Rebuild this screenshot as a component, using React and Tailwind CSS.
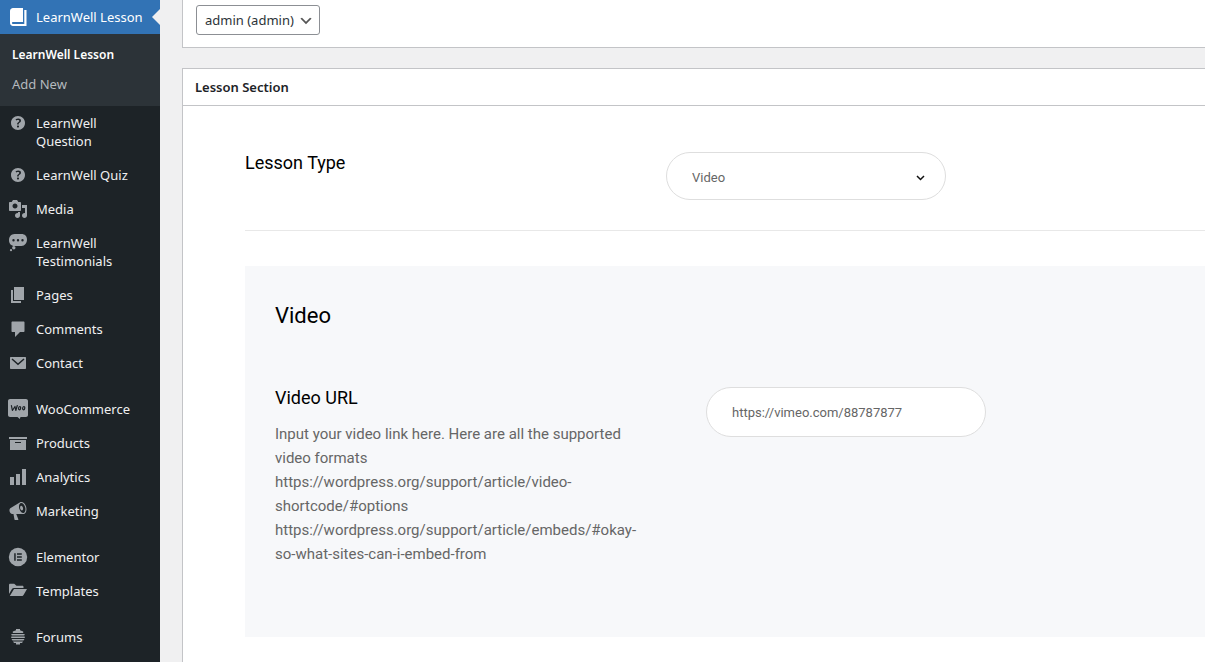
import React from 'react';

const Icon = ({ children }) => (
  <svg xmlns="http://www.w3.org/2000/svg" className="h-5 w-5 shrink-0" viewBox="0 0 20 20" fill="currentColor" aria-hidden="true">
    {children}
  </svg>
);

const icons = {
  book: <path d="M16.300 3h2.200v16H5c-1.660 0-3-1.340-3-3V4c0-1.660 1.340-3 3-3h10v14H5c-.55 0-1 .45-1 1s.45 1 1 1h11.300V3z" />,
  help: (
    <path d="M17 10c0-3.87-3.14-7-7-7-3.87 0-7 3.13-7 7s3.13 7 7 7c3.86 0 7-3.13 7-7zm-6.3 1.48H9.14v-.43c0-.38.08-.7.24-.98s.46-.57.88-.89c.41-.29.68-.53.81-.71.14-.18.2-.39.2-.62 0-.25-.09-.44-.28-.58-.19-.13-.45-.19-.79-.19-.58 0-1.25.15-2 .46l-.64-1.28c.87-.49 1.8-.74 2.77-.74.81 0 1.45.2 1.92.58.48.39.71.91.71 1.55 0 .43-.09.8-.29 1.11-.19.32-.57.67-1.11 1.06-.38.28-.61.49-.71.63-.1.15-.15.34-.15.57v.46zm-1.47 2.72c-.18-.17-.27-.42-.27-.73 0-.33.08-.58.26-.75s.43-.25.77-.25c.32 0 .57.09.75.26s.27.42.27.74c0 .3-.09.55-.27.72-.18.18-.43.27-.75.27-.33 0-.58-.09-.76-.26z" />
  ),
  media: (
    <path d="M13 11V4c0-.55-.45-1-1-1h-1.67L9 1H5L3.67 3H2c-.55 0-1 .45-1 1v7c0 .55.45 1 1 1h10c.55 0 1-.45 1-1zM7 4.5c1.38 0 2.5 1.12 2.5 2.5S8.38 9.5 7 9.5 4.5 8.38 4.5 7 5.62 4.5 7 4.5zM14 6h5v10.5c0 1.38-1.12 2.5-2.5 2.5S14 17.88 14 16.5s1.12-2.5 2.5-2.5c.17 0 .34.02.5.05V9h-3V6zm-4 8.05V13h2v3.5c0 1.38-1.12 2.5-2.5 2.5S7 17.88 7 16.5 8.12 14 9.5 14c.17 0 .34.02.5.05z" />
  ),
  testimonial: (
    <>
      <path fillRule="evenodd" d="M6.500 1h7C16.800 1 19 3.200 19 6.500S16.800 13 13.500 13h-7C3.200 13 1 10.500 1 7.200S3.200 1 6.500 1zM5.500 6a1.200 1.200 0 100 2.400 1.200 1.200 0 000-2.400zm4.500 0a1.200 1.200 0 100 2.400 1.200 1.200 0 000-2.400zm4.500 0a1.200 1.200 0 100 2.400 1.200 1.200 0 000-2.400z" />
      <circle cx="5.800" cy="14.700" r="1.700" />
      <circle cx="3" cy="17.200" r="1.100" />
    </>
  ),
  page: <path d="M6 15V2h10v13H6zm-1 1h8v2H3V5h2v11z" />,
  comment: <path d="M4.500 2.500h11c.6 0 1 .4 1 1v8.500c0 .6-.4 1-1 1H12l-5 5v-5H4.500c-.6 0-1-.4-1-1V3.500c0-.6.400-1 1-1z" />,
  email: (
    <>
      <path d="M3 4h14c.6 0 1 .4 1 1v10c0 .6-.4 1-1 1H3c-.6 0-1-.4-1-1V5c0-.6.400-1 1-1z" />
      <path d="M4 6l6 5.200L16 6" fill="none" stroke="#1d2327" strokeWidth="1.500" />
    </>
  ),
  woo: (
    <>
      <path d="M2 0h16c1.100 0 2 .9 2 2v14c0 1.100-.9 2-2 2h-5.500l-.7 2-2.300-2H2c-1.100 0-2-.9-2-2V2C0 .9.900 0 2 0z" />
      <path
        d="M3.400 6.500l1 5L7 7.500l.8 4L9.300 6.500M11.800 7.500c-1.500.2-1.800 3.300-.4 3.300s1.800-3.300.4-3.300zM15.900 7.500c-1.500.2-1.800 3.300-.4 3.300s1.800-3.300.4-3.300z"
        fill="none"
        stroke="#1d2327"
        strokeWidth="1.200"
        strokeLinecap="round"
        strokeLinejoin="round"
      />
    </>
  ),
  archive: <path d="M19 4v2H1V4h18zM2 7h16v10H2V7zm11 3V9H7v1h6z" />,
  chart: <path d="M18 18V2h-4v16h4zm-6 0V7H8v11h4zm-6 0v-8H2v8h4z" />,
  megaphone: (
    <path d="M18.150 5.940c.46 1.620.38 3.220-.02 4.480-.42 1.280-1.260 2.180-2.300 2.480-.16.06-.26.06-.4.06-.06.02-.12.02-.18.02-.06.02-.14.02-.22.02h-6.800l2.220 5.500c.02.14-.06.26-.14.34-.08.1-.24.16-.34.16H6.950c-.1 0-.26-.06-.34-.16-.08-.08-.16-.2-.14-.34l-1-5.500H4.250l-.02-.02c-.5.06-1.080-.18-1.540-.62s-.88-1.080-1.060-1.880c-.24-.8-.2-1.560-.02-2.200.18-.62.58-1.080 1.060-1.300l.02-.02 9-5.400c.1-.06.18-.1.24-.16.06-.04.14-.08.24-.12.16-.08.28-.12.5-.18 1.040-.3 2.240.1 3.220.98s1.840 2.240 2.260 3.860zm-2.580 5.980h-.02c.4-.1.74-.34 1.040-.7.58-.7.86-1.760.86-3.040 0-.64-.1-1.300-.28-1.980-.34-1.360-1.020-2.500-1.780-3.240s-1.680-1.100-2.460-.88c-.82.22-1.400.96-1.700 2-.32 1.040-.28 2.360.06 3.720.38 1.360 1 2.500 1.800 3.240.78.74 1.620 1.100 2.480.88zm-2.540-7.080c.22-.04.42-.02.62.04.38.16.76.48 1.020 1s.42 1.200.42 1.780c0 .3-.04.56-.12.8-.18.48-.44.84-.86.94-.34.1-.8-.06-1.140-.4s-.64-.86-.78-1.500c-.18-.62-.12-1.240.02-1.720s.48-.84.82-.94z" />
  ),
  elementor: (
    <>
      <circle cx="10" cy="10" r="9.200" />
      <path d="M6.200 6.200h1.500v7.600H6.200zM9 6.200h4.800v1.500H9zM9 9.250h4.800v1.500H9zM9 12.300h4.800v1.500H9z" fill="#1d2327" />
    </>
  ),
  folder: <path d="M1 4c0-.8.500-1.300 1.300-1.300h3.900L8.500 4.700h5.700c1 0 1.300.5 1.300 1.400v1H6c-1 0-1.700.4-2.200 1.200L1 13zM6 8h13l-3.300 5.800c-.5.900-1 1.200-2 1.200H1.800z" />,
  hive: (
    <path d="M8 2h4v1.200l3.200 1.300V6H4.800V4.500L8 3.200zM4 7h12l1 .7-1 .8H4l-1-.8zM3.500 9.500h13l.5.700-.5.800h-13l-.5-.8zM3.500 12h13l-1 1.500h-11zM5 14.500h10L14 16h-2v1.500H8V16H6z" />
  ),
};

const menuGroups = [
  [
    { label: 'LearnWell Question', icon: 'help' },
    { label: 'LearnWell Quiz', icon: 'help' },
    { label: 'Media', icon: 'media' },
    { label: 'LearnWell Testimonials', icon: 'testimonial' },
    { label: 'Pages', icon: 'page' },
    { label: 'Comments', icon: 'comment' },
    { label: 'Contact', icon: 'email' },
  ],
  [
    { label: 'WooCommerce', icon: 'woo' },
    { label: 'Products', icon: 'archive' },
    { label: 'Analytics', icon: 'chart' },
    { label: 'Marketing', icon: 'megaphone' },
  ],
  [
    { label: 'Elementor', icon: 'elementor' },
    { label: 'Templates', icon: 'folder' },
  ],
  [{ label: 'Forums', icon: 'hive' }],
];

const Sidebar = () => (
  <nav className="w-40 shrink-0 bg-[#1d2327] text-[13px] leading-[18px] text-[#f0f0f1]">
    {/* Current item with arrow */}
    <a href="#" className="relative flex gap-2 bg-[#3273b5] py-2 pl-2 text-white">
      <span className="-my-px flex">
        <Icon>{icons.book}</Icon>
      </span>
      LearnWell Lesson
      <span className="absolute right-0 top-[9px] border-y-8 border-r-8 border-y-transparent border-r-[#f0f0f1]" />
    </a>
    <ul className="bg-[#2c3338] px-3 py-[7px]">
      <li><a href="#" className="block py-[5px] text-xs font-semibold leading-[18px] text-white">LearnWell Lesson</a></li>
      <li><a href="#" className="block pb-[6px] pt-[6px] text-[#b4b9be]">Add New</a></li>
    </ul>

    {/* Menu groups */}
    <div className="flex flex-col gap-3">
      {menuGroups.map((group) => (
        <ul key={group[0].label}>
          {group.map((item) => (
            <li key={item.label}>
              <a href="#" className="flex items-start gap-2 py-2 pl-2 pr-4 hover:text-[#72aee6]">
                <span className="-my-px flex text-[#a0a5aa]">
                  <Icon>{icons[item.icon]}</Icon>
                </span>
                {item.label}
              </a>
            </li>
          ))}
        </ul>
      ))}
    </div>
  </nav>
);

const App = () => {
  return (
    <div className="flex min-h-screen bg-[#f0f0f1] font-['Noto_Sans',sans-serif]">
      <Sidebar />

      <main className="flex min-w-0 flex-1 flex-col gap-5 pl-[22px]">
        {/* Author box */}
        <section className="border-b border-l border-[#c3c4c7] bg-white pb-3 pl-[13px] pt-[5px]">
          <div className="relative w-[124px]">
            <select aria-label="Author" className="h-[30px] w-full appearance-none rounded-[3px] border border-[#8c8f94] bg-white pl-2 pt-px text-[13px] text-[#2c3338]">
              <option>admin (admin)</option>
            </select>
            <svg className="pointer-events-none absolute right-[6px] top-2 h-4 w-4" viewBox="0 0 20 20" fill="#555" aria-hidden="true">
              <path d="M5 6l5 5 5-5 2 1-7 7-7-7 2-1z" />
            </svg>
          </div>
        </section>

        {/* Lesson section */}
        <section className="flex-1 border-l border-t border-[#c3c4c7] bg-white">
          <h2 className="border-b border-[#c3c4c7] px-3 py-2 text-[13px] font-semibold leading-5 text-[#1d2327]">Lesson Section</h2>

          <div className="pl-[62px] pt-[46px] font-[Roboto,sans-serif]">
            <div className="grid grid-cols-[421px_1fr] border-b border-[#e8e8e8] pb-[30px]">
              <label htmlFor="lesson-type" className="text-[18px] leading-[22px] text-black">Lesson Type</label>
              <div className="relative w-[280px]">
                <select id="lesson-type" className="h-12 w-full appearance-none rounded-full border border-[#dedede] bg-white px-[25px] pt-[3px] text-[13px] text-[#666]">
                  <option>Video</option>
                </select>
                <svg className="pointer-events-none absolute right-5 top-[21px] h-[10px] w-[10px]" viewBox="0 0 10 10" fill="none" stroke="#111" strokeWidth="1.500" aria-hidden="true">
                  <path d="M1 3l3.500 3.500L8 3" />
                </svg>
              </div>
            </div>

            <div className="mt-[35px] bg-[#f7f8fa] px-[30px] pb-[71px] pt-[37px]">
              <h3 className="text-[22px] leading-[26px] text-black">Video</h3>
              <div className="mt-[58px] grid grid-cols-[431px_1fr]">
                <div className="w-[371px]">
                  <label htmlFor="video-url" className="block text-[18px] leading-[22px] text-black">Video URL</label>
                  <p className="mt-[13px] text-[15px] leading-6 text-[#666]">
                    Input your video link here. Here are all the supported video formats https://wordpress.org/support/article/video-shortcode/#options https://wordpress.org/support/article/embeds/#okay-so-what-sites-can-i-embed-from
                  </p>
                </div>
                <input
                  id="video-url"
                  type="text"
                  defaultValue="https://vimeo.com/88787877"
                  className="h-[50px] w-[280px] rounded-full border border-[#dedede] bg-white px-[25px] text-[13px] text-[#666]"
                />
              </div>
            </div>
          </div>
        </section>
      </main>
    </div>
  );
};

export default App;
